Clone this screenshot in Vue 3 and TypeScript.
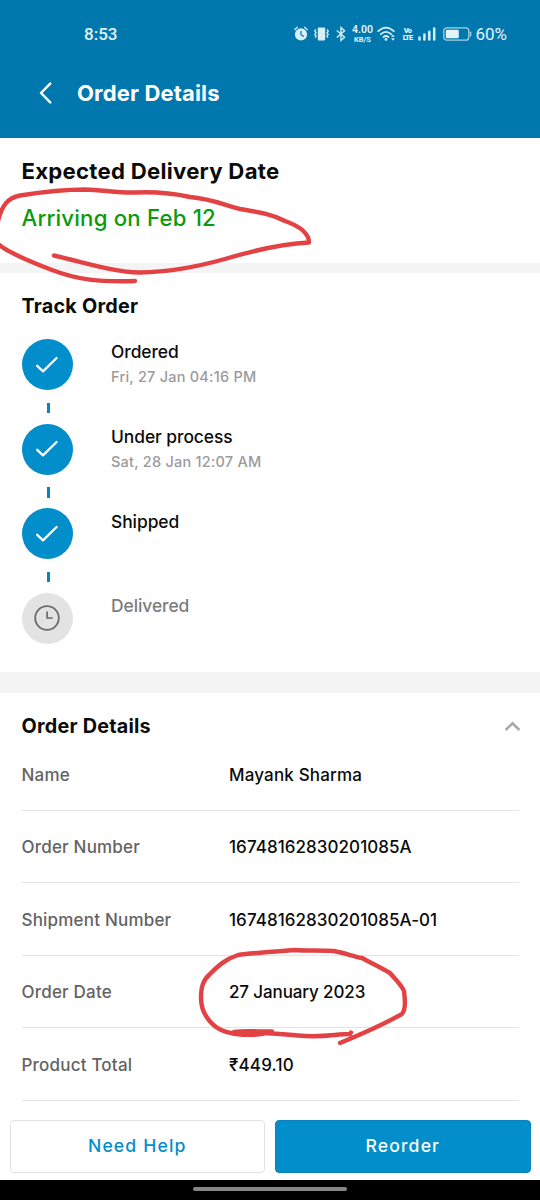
<script setup lang="ts">
interface Step {
  title: string
  time?: string
  done: boolean
}
interface Detail {
  label: string
  value: string
  kind: string
}

const steps: Step[] = [
  { title: 'Ordered', time: 'Fri, 27 Jan 04:16 PM', done: true },
  { title: 'Under process', time: 'Sat, 28 Jan 12:07 AM', done: true },
  { title: 'Shipped', done: true },
  { title: 'Delivered', done: false },
]

const details: Detail[] = [
  { label: 'Name', value: 'Mayank Sharma', kind: 'text' },
  { label: 'Order Number', value: '16748162830201085A', kind: 'code' },
  { label: 'Shipment Number', value: '16748162830201085A-01', kind: 'code' },
  { label: 'Order Date', value: '27 January 2023', kind: 'date' },
  { label: 'Product Total', value: '₹449.10', kind: 'text' },
]
</script>

<template>
  <div class="screen">
    <header class="top">
      <div class="status">
        <span class="clock">8:53</span>
        <div class="tray">
          <svg class="ic-alarm" width="14" height="16" viewBox="0 0 14 16">
            <circle cx="7" cy="8.4" r="6.1" fill="#d9edf6" />
            <path d="M.8 3.6 3.4 1.3M13.2 3.6l-2.6-2.3" stroke="#d9edf6" stroke-width="1.3" stroke-linecap="round" />
            <path d="M7 5.3v3.4l2.4 1.6" fill="none" stroke="#0078ad" stroke-width="1.2" stroke-linecap="round" />
          </svg>
          <svg class="ic-vibrate" width="15" height="14" viewBox="0 0 15 14">
            <rect x="3.8" y=".6" width="7.4" height="12.8" rx=".8" fill="#d9edf6" />
            <path d="M1.8 2.4.8 4.2l1.3 1.6L.8 7.4l1.3 1.6-1 1.8M13.2 2.4l1 1.8-1.3 1.6 1.3 1.6-1.3 1.6 1 1.8" fill="none" stroke="#d9edf6" stroke-width="1.3" />
          </svg>
          <svg class="ic-bt" width="10" height="16" viewBox="0 0 10 16">
            <path d="M.8 4.5 8.6 11.2 5 14.4V1.6l3.6 3.2L.8 11.5" fill="none" stroke="#d9edf6" stroke-width="1.4" />
          </svg>
          <div class="speed"><b>4.00</b><small>KB/S</small></div>
          <svg class="ic-wifi" width="19" height="16" viewBox="0 0 19 16">
            <g fill="none" stroke="#d9edf6" stroke-width="1.8" stroke-linecap="round">
              <path d="M1.2 5.2Q9 -2 16.8 5.2" />
              <path d="M3.8 8.2Q9 3.6 14.2 8.2" />
              <path d="M6.5 11Q9 9 11.4 11" />
            </g>
            <circle cx="9" cy="13.4" r="1.4" fill="#d9edf6" />
            <path d="m14 10.8 1.9-2.4 1.9 2.4zM14 12.3h3.8l-1.9 2.4z" fill="#d9edf6" />
          </svg>
          <div class="volte"><b>Vo</b><b>LTE</b></div>
          <svg class="ic-signal" width="18" height="14" viewBox="0 0 18 14">
            <path d="M1.5 12.6v-2.2M6.4 12.6V7.6M11.3 12.6V4.8M16.2 12.6V1.4" stroke="#d9edf6" stroke-width="2.5" stroke-linecap="round" />
          </svg>
          <svg class="ic-battery" width="29" height="14" viewBox="0 0 29 14">
            <rect x=".8" y=".8" width="25" height="12.4" rx="3" fill="none" stroke="#a5d2e5" stroke-width="1.3" />
            <rect x="2.8" y="2.8" width="13" height="8.4" rx="1.2" fill="#e3f3fa" />
            <path d="M27.6 5.2v3.6" stroke="#a5d2e5" stroke-width="1.4" stroke-linecap="round" />
          </svg>
          <span class="percent">60%</span>
        </div>
      </div>
      <div class="nav">
        <svg class="back" width="13" height="22" viewBox="0 0 13 22">
          <path d="M11.2 1.6 2 11l9.2 9.4" fill="none" stroke="#fff" stroke-width="2.5" stroke-linecap="round" stroke-linejoin="round" />
        </svg>
        <h1>Order Details</h1>
      </div>
    </header>

    <section class="delivery">
      <h2>Expected Delivery Date</h2>
      <p>Arriving on Feb 12</p>
    </section>

    <section class="track">
      <h3>Track Order</h3>
      <ol>
        <li v-for="s in steps" :key="s.title" :class="{ pending: !s.done }">
          <div class="dot">
            <svg v-if="s.done" width="24" height="18" viewBox="0 0 24 18">
              <path d="M2.2 9.8 8 15.4 21.6 2" fill="none" stroke="#fff" stroke-width="2.3" stroke-linecap="round" stroke-linejoin="round" />
            </svg>
            <svg v-else width="26" height="26" viewBox="0 0 26 26">
              <circle cx="13" cy="13" r="11.8" fill="none" stroke="#6b6b6b" stroke-width="1.8" />
              <path d="M13.1 6.4v6.6h5.6" fill="none" stroke="#6b6b6b" stroke-width="1.7" />
            </svg>
          </div>
          <div class="info">
            <div class="title">{{ s.title }}</div>
            <div v-if="s.time" class="time">{{ s.time }}</div>
          </div>
        </li>
      </ol>
    </section>

    <section class="details">
      <div class="head">
        <h3>Order Details</h3>
        <svg width="17" height="11" viewBox="0 0 17 11">
          <path d="M1.6 9 8.5 2.4 15.4 9" fill="none" stroke="#a6a9ae" stroke-width="2.6" />
        </svg>
      </div>
      <dl>
        <div v-for="d in details" :key="d.label" class="row">
          <dt>{{ d.label }}</dt>
          <dd :class="d.kind">{{ d.value }}</dd>
        </div>
      </dl>
    </section>

    <footer class="actions">
      <button class="help">Need Help</button>
      <button class="reorder">Reorder</button>
    </footer>
    <div class="gesture"><i></i></div>

    <svg class="ink" width="540" height="1200" viewBox="0 0 540 1200">
      <g fill="none" stroke="#e34245" stroke-width="4.4" stroke-linecap="round" stroke-linejoin="round">
        <path d="M-2 221C2 205 8 198 20 195.500C45 191.500 66 189.500 85 189.500C103 190 118 193 136 192.500C160 191.500 174 193.500 190 197C210 198.500 225 205 240 209C258 212 272 214 285 221C299 226 309 233 309 242.500C280 244 245 253 225 259C200 266 174 272 140 272.500C113 272 83 262 54 255.500" />
        <path d="M-2 244C8 253 31 262 52 270C78 280 99 282 135 281" />
        <path d="M340 1043C357 1036 386 1023 402 1014C406 1009 405 1000 404 991C401 984 395 979 390 973C380 967 371 963 362 958C352 956 345 953 334 951C319 950 307 951 295 950C275 951.500 252 953 238 955C225 959 217 967 210 974C203 980 201 987 201 998C201 1010 207 1020 216 1027C228 1036 257 1037 272 1031.500C260 1032 248 1030 234 1032C251 1032.500 280 1033.500 298 1035.500C323 1038 335 1034 350 1034L351 1032.500" />
      </g>
    </svg>
  </div>
</template>

<style>
body {
  margin: 0;
  background: #fff;
}
</style>

<style scoped>
.screen {
  position: relative;
  display: flex;
  flex-direction: column;
  width: 540px;
  height: 1200px;
  overflow: hidden;
  background: #fff;
  color: #0b0b0b;
  font-family: Inter, "Noto Sans", sans-serif;
}
h1, h2, h3, p, ol, dl, dd {
  margin: 0;
  padding: 0;
}
.top {
  flex: none;
  box-sizing: border-box;
  height: 138px;
  background: #0078ad;
  color: #fff;
}
.status {
  display: flex;
  align-items: center;
  justify-content: space-between;
  height: 68px;
  padding: 0 33px 0 84px;
  color: #e3f3fa;
}
.clock {
  font: 500 17px/20px Roboto, sans-serif;
}
.tray {
  display: flex;
  align-items: center;
}
.ic-vibrate { margin-left: 6px; }
.ic-bt { margin-left: 7px; }
.speed {
  display: flex;
  flex-direction: column;
  align-items: center;
  width: 22px;
  margin-left: 5px;
}
.speed b {
  font: 600 10.5px/10px Roboto, sans-serif;
}
.speed small {
  font: 700 7.5px/7px Roboto, sans-serif;
  padding-top: 1.5px;
}
.ic-wifi { margin-left: 4px; }
.volte {
  display: flex;
  flex-direction: column;
  align-items: center;
  width: 10px;
  margin-left: 6px;
  font: 700 7.5px/7.5px Roboto, sans-serif;
  letter-spacing: -0.9px;
}
.ic-signal { margin-left: 6px; }
.ic-battery { margin-left: 7px; }
.percent {
  margin-left: 3px;
  font: 400 17px/20px Roboto, sans-serif;
}
.nav {
  display: flex;
  align-items: center;
  height: 49px;
  padding-left: 39px;
}
.nav h1 {
  margin-left: 25px;
  font-size: 22px;
  line-height: 26px;
  font-weight: 700;
  letter-spacing: 0.15px;
}
.delivery {
  flex: none;
  box-sizing: border-box;
  height: 135px;
  padding: 19px 21.5px 0;
  border-bottom: 10px solid #f4f4f4;
}
.delivery h2 {
  font-size: 22.2px;
  line-height: 28px;
  font-weight: 650;
  letter-spacing: 0.25px;
}
.delivery p {
  margin-top: 19px;
  font-size: 22.2px;
  line-height: 28px;
  font-weight: 500;
  letter-spacing: 0.2px;
  color: #0a9b0a;
}
.track {
  flex: none;
  box-sizing: border-box;
  height: 420px;
  padding: 21px 21.5px 0;
  border-bottom: 21px solid #f4f4f4;
}
h3 {
  font-size: 19.8px;
  line-height: 24px;
  font-weight: 650;
  letter-spacing: 0.22px;
}
.track ol {
  margin-top: 21.2px;
  list-style: none;
}
.track li {
  display: flex;
  height: 84.6px;
}
.dot {
  position: relative;
  display: grid;
  place-items: center;
  flex: none;
  width: 51px;
  height: 51px;
  border-radius: 50%;
  background: #028dcb;
}
.pending .dot {
  background: #e3e3e3;
}
li:not(:last-child) .dot::after {
  content: "";
  position: absolute;
  top: 63.7px;
  left: 25.5px;
  width: 2.6px;
  height: 10.2px;
  background: #0d84b8;
}
.info {
  margin-left: 38.5px;
  padding-top: 1.2px;
}
.title {
  font-size: 17.4px;
  line-height: 23px;
  font-weight: 500;
  letter-spacing: -0.05px;
}
.time {
  margin-top: 4px;
  font-size: 14.5px;
  line-height: 20px;
  font-weight: 500;
  letter-spacing: 0.23px;
  color: #9b9b9b;
}
.pending .title {
  color: #7c7c7c;
}
.details {
  flex: none;
  height: 405.5px;
  padding: 21px 21px 0 21.5px;
}
.head {
  display: flex;
  align-items: center;
  justify-content: space-between;
}
.head svg {
  margin-right: -1.5px;
}
.row {
  box-sizing: border-box;
  display: flex;
  height: 72.5px;
  padding-top: 25.9px;
  border-bottom: 1px solid #e4e4e4;
  font-size: 17px;
  line-height: 22px;
}
.row dt {
  flex: none;
  width: 207.5px;
  font-weight: 450;
  letter-spacing: 0.2px;
  color: #636363;
}
.row dd {
  font-weight: 500;
}
.text { letter-spacing: 0.17px; }
.code { letter-spacing: 0.06px; }
.date { letter-spacing: -0.12px; }
.actions {
  flex: 1;
  display: flex;
  gap: 10px;
  padding: 0 9.5px 0 9.5px;
}
button {
  box-sizing: border-box;
  flex: 1;
  height: 53px;
  margin: 0;
  padding: 0;
  border-radius: 4px;
  font: 500 17.6px/22px Inter, sans-serif;
  letter-spacing: 1.15px;
}
.help {
  border: 1px solid #e2e2e2;
  background: #fff;
  color: #028dcb;
}
.reorder {
  border: 1px solid #0a83bb;
  background: #028dcb;
  color: #fff;
}
.gesture {
  flex: none;
  display: grid;
  place-items: center;
  height: 20.5px;
  padding-bottom: 1px;
  box-sizing: border-box;
  background: #000;
}
.gesture i {
  width: 154px;
  height: 4px;
  border-radius: 2px;
  background: #868686;
}
.ink {
  position: absolute;
  top: 0;
  left: 0;
  pointer-events: none;
}
</style>
